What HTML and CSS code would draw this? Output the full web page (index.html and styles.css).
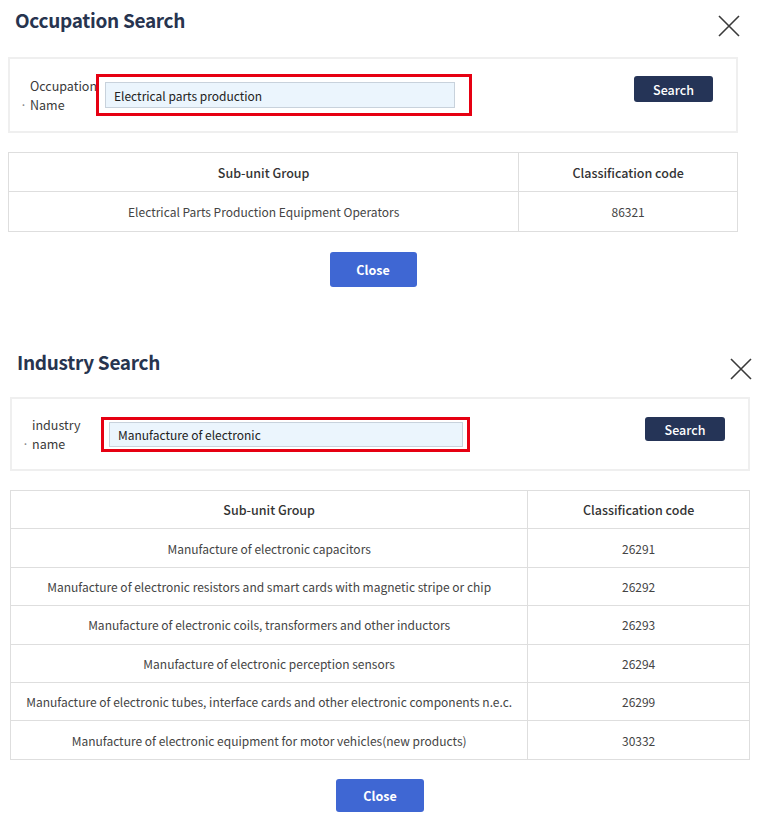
FILE: index.html
```html
<!DOCTYPE html>
<html lang="en">

<head>
    <meta charset="UTF-8">
    <meta name="viewport" content="width=device-width, initial-scale=1.0">
    <title>Occupation / Industry Search</title>
    <link rel="stylesheet" href="styles.css">
</head>

<body>
    <!-- occupation popup -->
    <div class="popup popup-occ">
        <div class="pop-head">
            <h2>Occupation Search</h2>
            <button type="button" class="btn-x" aria-label="close">
                <svg width="22" height="22" viewBox="0 0 22 22"><path d="M1 1 L21 21 M21 1 L1 21" stroke="#3a3a3a" stroke-width="1.6" fill="none" /></svg>
            </button>
        </div>

        <div class="search-box">
            <label class="lbl" for="occName">
                <span>Occupation</span>
                <span><i class="dot">·</i>Name</span>
            </label>
            <div class="mark">
                <input type="text" id="occName" class="input" value="Electrical parts production">
            </div>
            <button type="button" class="btn-search">Search</button>
        </div>

        <table class="tbl">
            <thead>
                <tr>
                    <th class="c1">Sub-unit Group</th>
                    <th>Classification code</th>
                </tr>
            </thead>
            <tbody>
                <tr>
                    <td>Electrical Parts Production Equipment Operators</td>
                    <td>86321</td>
                </tr>
            </tbody>
        </table>

        <div class="pop-foot">
            <button type="button" class="btn-close">Close</button>
        </div>
    </div>

    <!-- industry popup -->
    <div class="popup popup-ind">
        <div class="pop-head">
            <h2>Industry Search</h2>
            <button type="button" class="btn-x" aria-label="close">
                <svg width="22" height="22" viewBox="0 0 22 22"><path d="M1 1 L21 21 M21 1 L1 21" stroke="#3a3a3a" stroke-width="1.6" fill="none" /></svg>
            </button>
        </div>

        <div class="search-box">
            <label class="lbl" for="indName">
                <span>industry</span>
                <span><i class="dot">·</i>name</span>
            </label>
            <div class="mark">
                <input type="text" id="indName" class="input" value="Manufacture of electronic">
            </div>
            <button type="button" class="btn-search">Search</button>
        </div>

        <table class="tbl">
            <thead>
                <tr>
                    <th class="c1">Sub-unit Group</th>
                    <th>Classification code</th>
                </tr>
            </thead>
            <tbody>
                <tr>
                    <td>Manufacture of electronic capacitors</td>
                    <td>26291</td>
                </tr>
                <tr>
                    <td>Manufacture of electronic resistors and smart cards with magnetic stripe or chip</td>
                    <td>26292</td>
                </tr>
                <tr>
                    <td>Manufacture of electronic coils, transformers and other inductors</td>
                    <td>26293</td>
                </tr>
                <tr>
                    <td>Manufacture of electronic perception sensors</td>
                    <td>26294</td>
                </tr>
                <tr>
                    <td>Manufacture of electronic tubes, interface cards and other electronic components n.e.c.</td>
                    <td>26299</td>
                </tr>
                <tr>
                    <td>Manufacture of electronic equipment for motor vehicles(new products)</td>
                    <td>30332</td>
                </tr>
            </tbody>
        </table>

        <div class="pop-foot">
            <button type="button" class="btn-close">Close</button>
        </div>
    </div>
</body>

</html>
```

FILE: styles.css
```css
body {
    margin: 0;
    background-color: #ffffff;
    font-family: "Noto Sans CJK KR", "Noto Sans", sans-serif;
    font-size: 12px;
    color: #333333;
}

.popup {
    box-sizing: border-box;
}

.popup-occ {
    width: 730px;
    margin-left: 8px;
}

.popup-ind {
    width: 740px;
    margin-left: 10px;
    margin-top: 55px;
}

.pop-head {
    display: flex;
    justify-content: space-between;
    align-items: flex-start;
    height: 57px;
    padding: 8px 0 0 7px;
    box-sizing: border-box;
}

.popup-ind .pop-head {
    height: 55px;
}

.pop-head h2 {
    margin: 0;
    font-size: 19px;
    line-height: 24px;
    font-weight: 700;
    letter-spacing: -0.3px;
    color: #27344f;
}

.btn-x {
    border: none;
    background: none;
    padding: 0;
    margin: 7px -2px 0 0;
    width: 22px;
    height: 22px;
    cursor: pointer;
}

.popup-ind .btn-x {
    margin: 8px -2px 0 0;
}

.btn-x svg {
    display: block;
}

/* search row */
.search-box {
    display: flex;
    align-items: center;
    height: 76px;
    box-sizing: border-box;
    border: 2px solid #efefef;
    padding: 0 23px 0 0;
}

.popup-ind .search-box {
    height: 74px;
}

.lbl {
    width: 86px;
    display: flex;
    flex-direction: column;
    padding-left: 20px;
    box-sizing: border-box;
    font-size: 12.5px;
    line-height: 19px;
    color: #3a3a3a;
    white-space: nowrap;
}

.popup-ind .lbl {
    width: 89px;
}

.dot {
    font-style: normal;
    display: inline-block;
    width: 10px;
    margin-left: -10px;
    color: #888888;
}

/* red highlight round the input */
.mark {
    border: 3px solid #e60012;
    padding: 5px 14px 5px 6px;
}

.popup-ind .mark {
    padding: 2px 4px 2px 5px;
}

.input {
    display: block;
    width: 350px;
    height: 26px;
    box-sizing: border-box;
    border: 1px solid #c8d2dc;
    background-color: #ebf5fd;
    padding: 0 8px;
    font-family: inherit;
    font-size: 12px;
    color: #222222;
    outline: none;
}

.popup-ind .input {
    width: 354px;
    height: 25px;
}

.btn-search {
    margin-left: auto;
    margin-bottom: 12px;
    width: 79px;
    height: 26px;
    border: none;
    border-radius: 3px;
    background-color: #253457;
    color: #ffffff;
    font-family: inherit;
    font-size: 12.5px;
    font-weight: 500;
    cursor: pointer;
}

.popup-ind .btn-search {
    width: 80px;
    height: 24px;
    margin-bottom: 10px;
}

/* result table */
.tbl {
    width: 100%;
    margin-top: 19px;
    border-collapse: collapse;
}

.tbl th,
.tbl td {
    border: 1px solid #dedede;
    height: 37.4px;
    padding: 0 2px;
    text-align: center;
    vertical-align: middle;
    font-size: 12px;
    white-space: nowrap;
}

.popup-occ .tbl td {
    height: 39px;
}

.popup-occ .tbl th {
    height: 38px;
}

.tbl th {
    font-weight: 500;
    font-size: 12.5px;
    color: #333333;
}

.tbl td {
    color: #444444;
}

.tbl .c1 {
    width: 70%;
}

.pop-foot {
    display: flex;
    justify-content: center;
    margin-top: 20px;
}

.popup-ind .pop-foot {
    margin-top: 19px;
}

.btn-close {
    width: 87px;
    height: 35px;
    border: none;
    border-radius: 3px;
    background-color: #3f67d3;
    color: #ffffff;
    font-family: inherit;
    font-size: 12.5px;
    font-weight: 700;
    cursor: pointer;
}

.popup-ind .btn-close {
    width: 88px;
    height: 33px;
}
```
